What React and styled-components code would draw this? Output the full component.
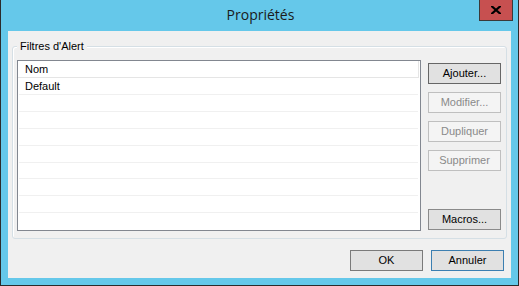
import React from "react";
import styled, { createGlobalStyle } from "styled-components";

const Global = createGlobalStyle`
  html, body { margin: 0; padding: 0; background: #63c7ea; }
  body { font-family: "Liberation Sans", Arial, sans-serif; font-size: 11px; }
  * { box-sizing: border-box; }
`;

const Window = styled.div`
  width: 519px;
  height: 286px;
  background: #65c8ea;
  border-left: 1px solid #2b2b2b;
  border-right: 1px solid #2b2b2b;
  border-bottom: 1px solid #2b2b2b;
  display: flex;
  flex-direction: column;
  padding: 0 7px 7px 7px;
`;

const TitleBar = styled.div`
  height: 31px;
  flex: none;
  display: grid;
  grid-template-columns: 1fr auto 1fr;
  align-items: start;
  margin-right: -2px;
`;

const Title = styled.div`
  grid-column: 2;
  font-family: "Open Sans", "Noto Sans", sans-serif;
  font-size: 14px;
  color: #1a1a1a;
  line-height: 20px;
  padding-top: 5px;
`;

const CloseButton = styled.div`
  grid-column: 3;
  justify-self: end;
  width: 34px;
  height: 21px;
  background: #c75050;
  border: 1px solid #3a3a3a;
  border-top: none;
  display: flex;
  align-items: center;
  justify-content: center;
`;

const List = styled.div`
  width: 404px;
  height: 171px;
  background: #fff;
  border: 1px solid #828790;
  display: flex;
  flex-direction: column;
`;

const Client = styled.div`
  flex: 1;
  background: #f0f0f0;
  display: flex;
  flex-direction: column;
`;

const GroupBox = styled.div`
  position: relative;
  margin: 15px 4px 0 4px;
  border: 1px solid #d5dfe5;
  border-radius: 3px;
  box-shadow: inset 1px 1px 0 #fff;
  padding: 13px 5px 7px 4px;
  display: flex;
  gap: 7px;
`;

const Legend = styled.span`
  position: absolute;
  left: 4px;
  top: -7px;
  padding: 0 3px;
  background: #f0f0f0;
  line-height: 13px;
  color: #000;
`;

const Header = styled.div`
  height: 17px;
  margin-right: 1px;
  border-bottom: 1px solid #e5e5e5;
  border-right: 1px solid #e5e5e5;
  padding-left: 7px;
  line-height: 16px;
  color: #000;
`;

const Row = styled.div`
  height: 17px;
  margin: 0 2px 0 1px;
  border-bottom: 1px solid ${(p) => (p.$last ? "transparent" : "#f0f0f0")};
  padding-left: 6px;
  line-height: 16px;
  color: #000;
`;

const ButtonColumn = styled.div`
  width: 73px;
  display: flex;
  flex-direction: column;
  gap: 8px;
  padding: 3px 0 1px 0;
`;

const Button = styled.div`
  width: 73px;
  height: 21px;
  flex: none;
  display: flex;
  align-items: center;
  justify-content: center;
  background: ${(p) => (p.$disabled ? "#f4f4f4" : "#e1e1e1")};
  border: 1px solid ${(p) => p.$border || (p.$disabled ? "#bfbfbf" : "#8a8a8a")};
  color: ${(p) => (p.$disabled ? "#8a8a8a" : "#000")};
  margin-top: ${(p) => (p.$push ? "auto" : "0")};
  line-height: 1;
`;

const Footer = styled.div`
  display: flex;
  justify-content: flex-end;
  gap: 8px;
  padding: 11px 7px 7px 7px;
`;

const rows = ["Default", "", "", "", "", "", "", "", ""];

function CloseGlyph() {
  return (
    <svg width="10" height="8" viewBox="0 0 10 8">
      <path d="M1 0.5 L9 7.5 M9 0.5 L1 7.5" stroke="#000" strokeWidth="2.2" strokeLinecap="square" fill="none" />
    </svg>
  );
}

export default function App() {
  return (
    <>
      <Global />
      <Window>
        <TitleBar>
          <Title>Propriétés</Title>
          <CloseButton>
            <CloseGlyph />
          </CloseButton>
        </TitleBar>
        <Client>
          <GroupBox>
            <Legend>Filtres d'Alert</Legend>
            <List>
              <Header>Nom</Header>
              {rows.map((r, i) => (
                <Row key={i} $last={i === rows.length - 1}>
                  {r}
                </Row>
              ))}
            </List>
            <ButtonColumn>
              <Button $border="#666">Ajouter...</Button>
              <Button $disabled>Modifier...</Button>
              <Button $disabled>Dupliquer</Button>
              <Button $disabled>Supprimer</Button>
              <Button $push>Macros...</Button>
            </ButtonColumn>
          </GroupBox>
          <Footer>
            <Button $border="#7a7a7a">OK</Button>
            <Button $border="#3c7fb1">Annuler</Button>
          </Footer>
        </Client>
      </Window>
    </>
  );
}
